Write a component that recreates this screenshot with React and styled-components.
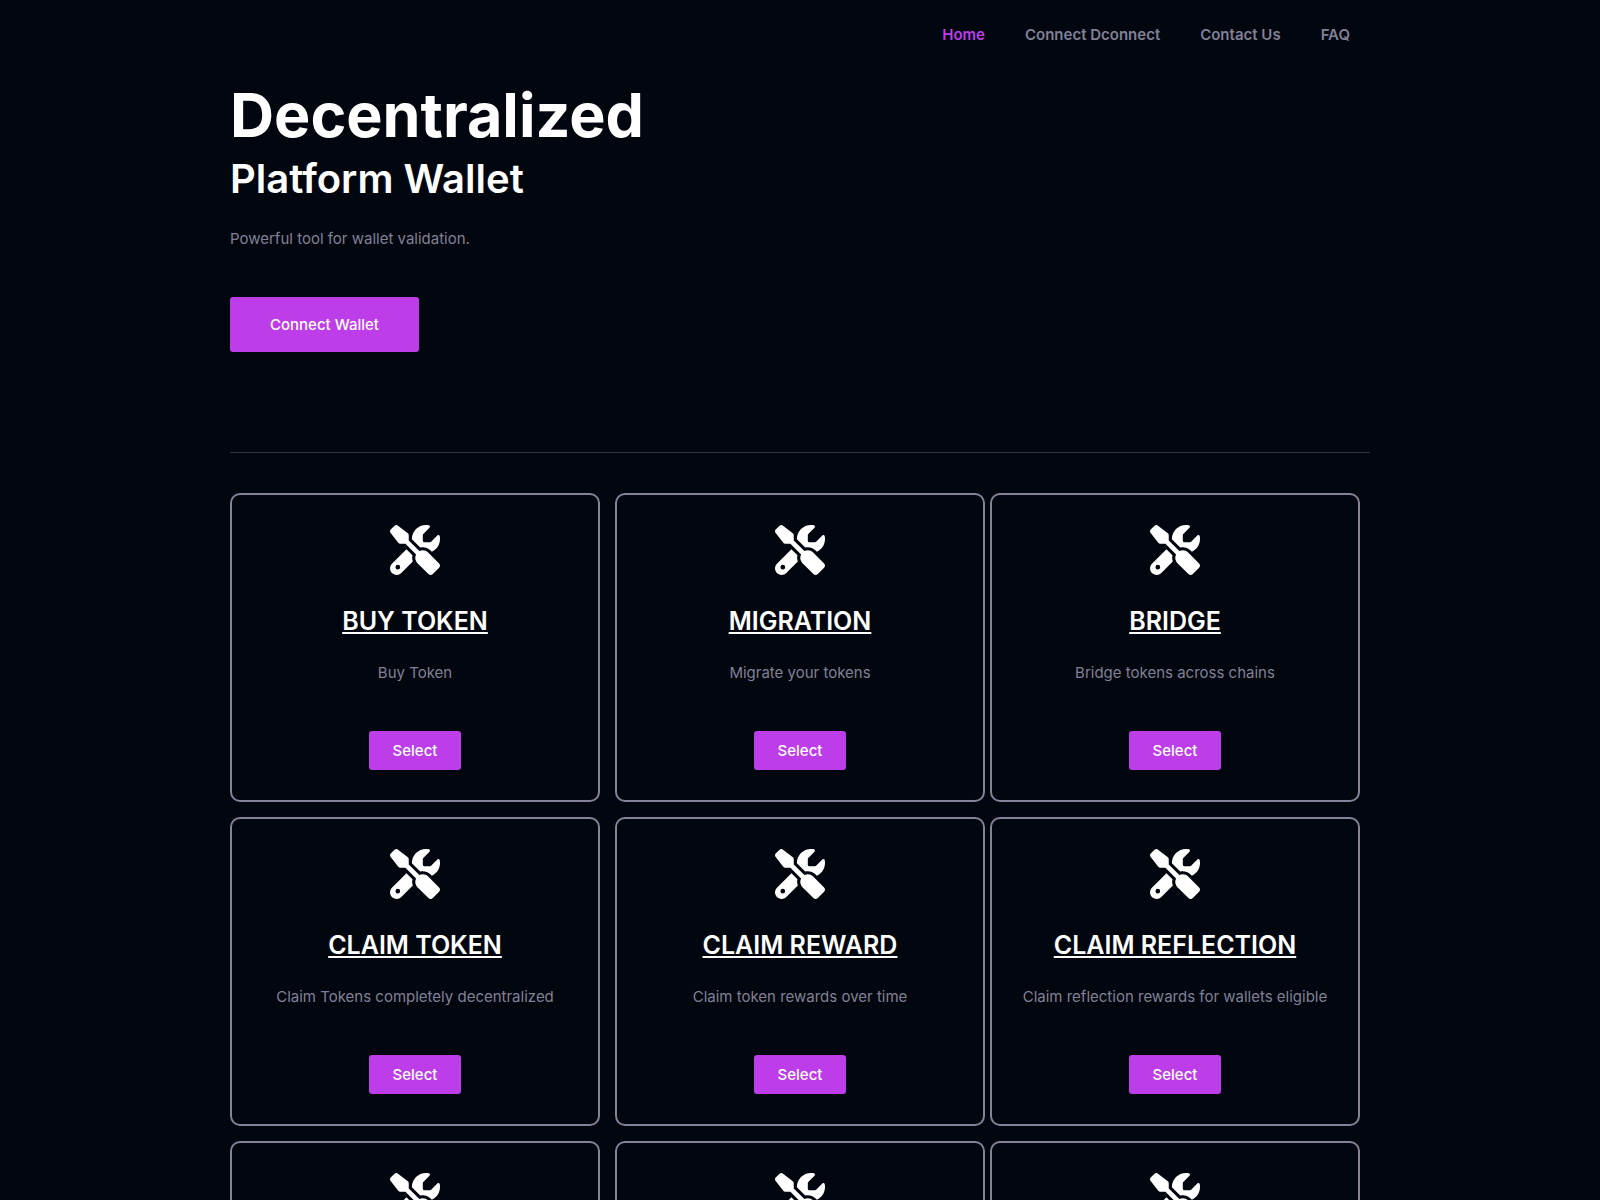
import React from 'react';
import { FaScrewdriverWrench } from 'react-icons/fa6';
import styled, { createGlobalStyle } from 'styled-components';

const GlobalStyle = createGlobalStyle`
  *,
  *::before,
  *::after {
    box-sizing: border-box;
  }

  body {
    margin: 0;
    background: #02060f;
    color: #818196;
    font-family: Inter, "Liberation Sans", sans-serif;
    font-size: 15px;
    line-height: 23px;
  }

  h1, h2, h3, p {
    margin: 0;
  }
`;

const Container = styled.div`
  width: 100%;
  max-width: 1140px;
  margin: 0 auto;
`;

const Nav = styled.nav`
  display: flex;
  justify-content: flex-end;
  padding: 23px 0;
`;

const NavLink = styled.a`
  padding: 0 20px;
  color: ${({ $active }) => ($active ? '#bd3de9' : '#818196')};
  font-weight: 600;
  text-decoration: none;
`;

const Hero = styled.header`
  padding: 8px 0 100px;
  border-bottom: 1px solid #33333f;

  h1 {
    color: #fff;
    font-size: 61px;
    font-weight: 700;
    line-height: 76px;
  }

  h2 {
    color: #fff;
    font-size: 40px;
    font-weight: 600;
    line-height: 52px;
  }

  p {
    margin: 22px 0 47px;
  }
`;

const Button = styled.button`
  display: inline-block;
  padding: ${({ $large }) => ($large ? '16px 40px' : '8px 24px')};
  border: 0;
  border-radius: 3px;
  background: #bd3de9;
  color: #fff;
  cursor: pointer;
  font-family: inherit;
  font-size: 15px;
  font-weight: 500;
  line-height: 23px;
`;

const CardGrid = styled.main`
  display: grid;
  grid-template-columns: repeat(3, 1fr);
  row-gap: 15px;
  padding: 40px 0;
`;

const ScCard = styled.section`
  display: flex;
  flex-direction: column;
  align-items: center;
  width: calc(100% - 10px);
  padding: 30px;
  border: 2px solid #858199;
  border-radius: 10px;
  text-align: center;

  &:nth-child(3n + 2) {
    justify-self: center;
  }

  > svg {
    color: #fff;
    font-size: 50px;
  }

  h3 {
    margin: 30px 0 24px;
    color: #fff;
    font-size: 25px;
    font-weight: 600;
    line-height: 32px;
    text-decoration: underline;
    text-transform: uppercase;
  }

  p {
    margin-bottom: 47px;
  }
`;

const links = [
  { label: 'Home', href: '#home', active: true },
  { label: 'Connect Dconnect', href: '#connect' },
  { label: 'Contact Us', href: '#contact' },
  { label: 'FAQ', href: '#faq' },
];

const services = [
  { title: 'Buy Token', text: 'Buy Token' },
  { title: 'Migration', text: 'Migrate your tokens' },
  { title: 'Bridge', text: 'Bridge tokens across chains' },
  { title: 'Claim Token', text: 'Claim Tokens completely decentralized' },
  { title: 'Claim Reward', text: 'Claim token rewards over time' },
  { title: 'Claim Reflection', text: 'Claim reflection rewards for wallets eligible' },
  { title: 'Staking', text: 'Stake your tokens' },
  { title: 'Swap', text: 'Swap tokens' },
  { title: 'Airdrop', text: 'Claim your airdrop' },
];

const Card = ({ title, text }) => (
  <ScCard>
    <FaScrewdriverWrench aria-hidden="true" />
    <h3>{title}</h3>
    <p>{text}</p>
    <Button type="button">Select</Button>
  </ScCard>
);

const App = () => (
  <>
    <GlobalStyle />
    <Container id="home">
      <Nav>
        {links.map(({ label, href, active }) => (
          <NavLink key={label} href={href} $active={active}>{label}</NavLink>
        ))}
      </Nav>
      <Hero>
        <h1>Decentralized</h1>
        <h2>Platform Wallet</h2>
        <p>Powerful tool for wallet validation.</p>
        <Button type="button" $large>Connect Wallet</Button>
      </Hero>
      <CardGrid>
        {services.map((service) => (
          <Card key={service.title} title={service.title} text={service.text} />
        ))}
      </CardGrid>
    </Container>
  </>
);

export default App;
